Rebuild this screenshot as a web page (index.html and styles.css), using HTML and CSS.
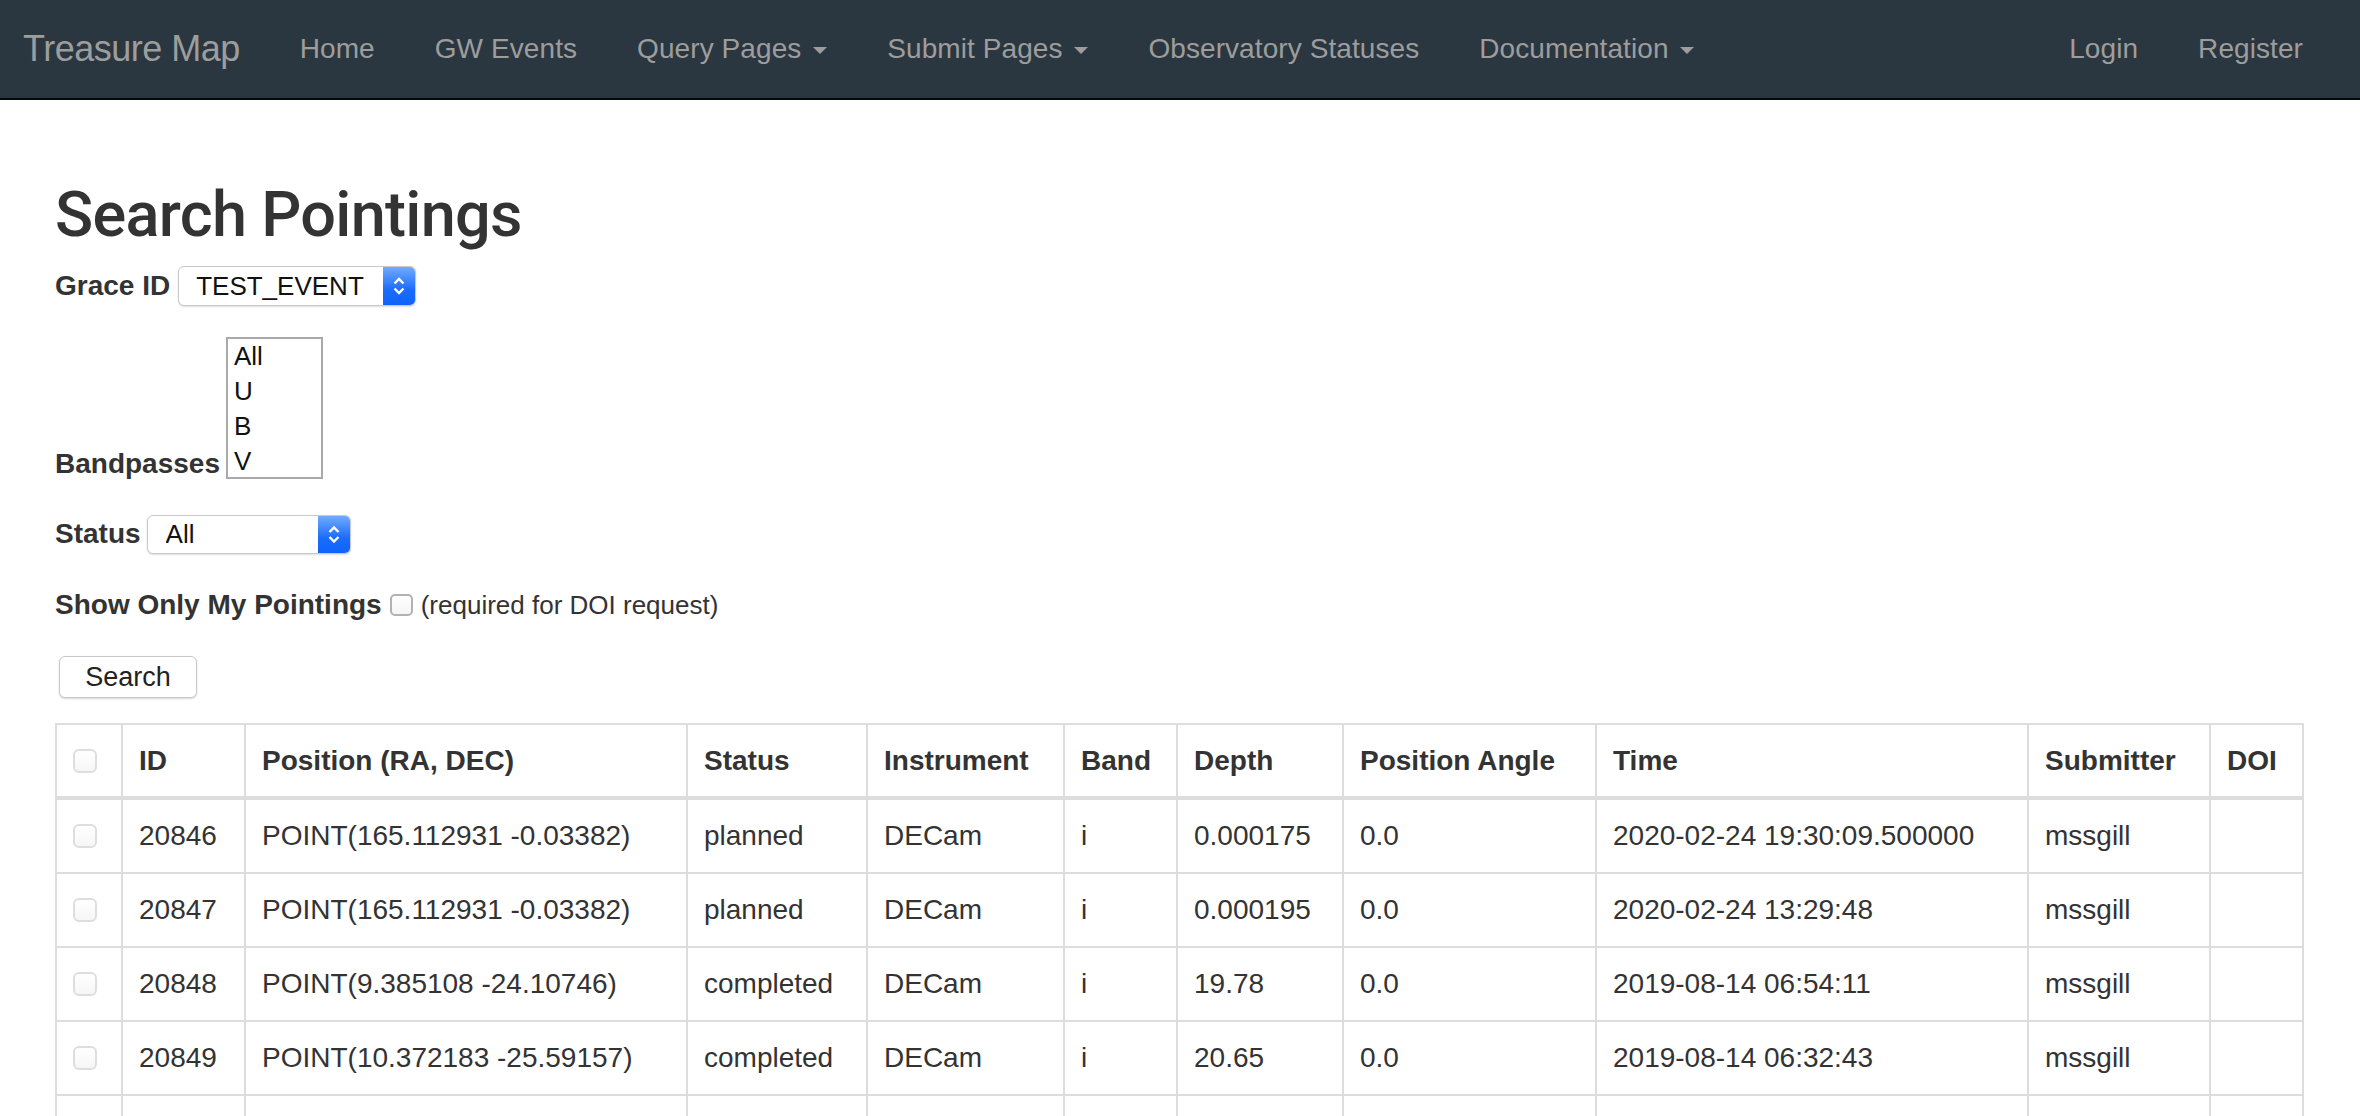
FILE: index.html
```html
<!DOCTYPE html>
<html lang="en">
<head>
<meta charset="utf-8">
<title>Search Pointings - Treasure Map</title>
<link rel="stylesheet" href="styles.css">
</head>
<body>
<nav class="navbar">
  <a class="brand" href="#">Treasure Map</a>
  <ul class="nav">
    <li><a class="nav-link" href="#">Home</a></li>
    <li><a class="nav-link" href="#">GW Events</a></li>
    <li><a class="nav-link" href="#">Query Pages <span class="caret"></span></a></li>
    <li><a class="nav-link" href="#">Submit Pages <span class="caret"></span></a></li>
    <li><a class="nav-link" href="#">Observatory Statuses</a></li>
    <li><a class="nav-link" href="#">Documentation <span class="caret"></span></a></li>
  </ul>
  <ul class="nav nav-right">
    <li><a class="nav-link" href="#">Login</a></li>
    <li><a class="nav-link" href="#">Register</a></li>
  </ul>
</nav>

<main class="page">
  <h1 class="title">Search Pointings</h1>
  <form class="search-form">
    <div class="form-row row-grace">
      <label class="form-label">Grace ID</label>
      <span class="mac-select mac-select--grace">
        <select class="mac-select__input"><option>TEST_EVENT</option></select>
        <span class="mac-select__btn"><svg width="32" height="40" viewBox="0 0 32 40"><path d="M11.5 17.5 L16 13 L20.5 17.5 M11.5 22.5 L16 27 L20.5 22.5" fill="none" stroke="#fff" stroke-width="2.4"/></svg></span>
      </span>
    </div>
    <div class="form-row row-bands">
      <label class="form-label form-label--bottom">Bandpasses</label>
      <select class="listbox" multiple size="4">
        <option>All</option>
        <option>U</option>
        <option>B</option>
        <option>V</option>
      </select>
    </div>
    <div class="form-row row-status">
      <label class="form-label">Status</label>
      <span class="mac-select mac-select--status">
        <select class="mac-select__input mac-select__input--status"><option>All</option></select>
        <span class="mac-select__btn"><svg width="32" height="39" viewBox="0 0 32 39"><path d="M11.5 17 L16 12.5 L20.5 17 M11.5 22 L16 26.5 L20.5 22" fill="none" stroke="#fff" stroke-width="2.4"/></svg></span>
      </span>
    </div>
    <div class="form-row row-mine">
      <label class="form-label">Show Only My Pointings</label>
      <input class="check check--form" type="checkbox">
      <span class="hint">(required for DOI request)</span>
    </div>
    <div class="form-row row-submit">
      <button class="btn" type="button">Search</button>
    </div>
  </form>

  <table class="data-table">
    <thead>
      <tr>
        <th class="c-check"><input class="check" type="checkbox"></th>
        <th class="c-id">ID</th>
        <th class="c-pos">Position (RA, DEC)</th>
        <th class="c-status">Status</th>
        <th class="c-inst">Instrument</th>
        <th class="c-band">Band</th>
        <th class="c-depth">Depth</th>
        <th class="c-angle">Position Angle</th>
        <th class="c-time">Time</th>
        <th class="c-sub">Submitter</th>
        <th class="c-doi">DOI</th>
      </tr>
    </thead>
    <tbody>
      <tr>
        <td><input class="check" type="checkbox"></td>
        <td>20846</td><td>POINT(165.112931 -0.03382)</td><td>planned</td><td>DECam</td><td>i</td><td>0.000175</td><td>0.0</td><td>2020-02-24 19:30:09.500000</td><td>mssgill</td><td></td>
      </tr>
      <tr>
        <td><input class="check" type="checkbox"></td>
        <td>20847</td><td>POINT(165.112931 -0.03382)</td><td>planned</td><td>DECam</td><td>i</td><td>0.000195</td><td>0.0</td><td>2020-02-24 13:29:48</td><td>mssgill</td><td></td>
      </tr>
      <tr>
        <td><input class="check" type="checkbox"></td>
        <td>20848</td><td>POINT(9.385108 -24.10746)</td><td>completed</td><td>DECam</td><td>i</td><td>19.78</td><td>0.0</td><td>2019-08-14 06:54:11</td><td>mssgill</td><td></td>
      </tr>
      <tr>
        <td><input class="check" type="checkbox"></td>
        <td>20849</td><td>POINT(10.372183 -25.59157)</td><td>completed</td><td>DECam</td><td>i</td><td>20.65</td><td>0.0</td><td>2019-08-14 06:32:43</td><td>mssgill</td><td></td>
      </tr>
      <tr>
        <td><input class="check" type="checkbox"></td>
        <td>20850</td><td>POINT(11.204571 -24.87312)</td><td>completed</td><td>DECam</td><td>i</td><td>20.41</td><td>0.0</td><td>2019-08-14 06:12:05</td><td>mssgill</td><td></td>
      </tr>
    </tbody>
  </table>
</main>
</body>
</html>
```

FILE: styles.css
```css
* {
  box-sizing: border-box;
}

html,
body {
  margin: 0;
  padding: 0;
}

body {
  font-family: "Liberation Sans", Arial, Helvetica, sans-serif;
  font-size: 28px;
  line-height: 40px;
  color: #333;
  background: #fff;
}

/* ---------- navbar ---------- */
.navbar {
  display: flex;
  align-items: center;
  height: 100px;
  padding: 0 27px 0 23px;
  background: #2b3740;
  border-bottom: 2px solid #080808;
}

.brand {
  padding-right: 30px;
  color: #9d9d9d;
  font-size: 36px;
  line-height: 40px;
  letter-spacing: -0.5px;
  text-decoration: none;
}

.nav {
  display: flex;
  margin: 0;
  padding: 0;
  list-style: none;
}

.nav-right {
  margin-left: auto;
}

.nav-link {
  display: block;
  padding: 0 30px;
  color: #9d9d9d;
  line-height: 40px;
  letter-spacing: 0.08px;
  text-decoration: none;
  white-space: nowrap;
}

.caret {
  display: inline-block;
  width: 0;
  height: 0;
  margin-left: 4px;
  vertical-align: middle;
  border-top: 7px solid #9d9d9d;
  border-left: 7px solid transparent;
  border-right: 7px solid transparent;
}

/* ---------- page ---------- */
.page {
  padding: 80px 58px 0 55px;
}

.title {
  margin: 0;
  font-family: Roboto, "Liberation Sans", Arial, sans-serif;
  font-weight: 500;
  font-size: 63px;
  line-height: 69px;
  letter-spacing: -0.7px;
  color: #333;
}

.search-form {
  display: flex;
  flex-direction: column;
  align-items: flex-start;
}

.form-row {
  display: flex;
  align-items: center;
  gap: 8px;
}

.row-grace {
  margin-top: 17px;
}

.row-bands {
  margin-top: 31px;
  align-items: flex-end;
  gap: 6px;
}

.row-status {
  margin-top: 35px;
  gap: 6px;
}

.row-mine {
  margin-top: 31px;
  height: 40px;
}

.row-submit {
  margin-top: 31px;
}

.form-label {
  font-weight: bold;
  line-height: 40px;
  color: #333;
}

.form-label--bottom {
  margin-bottom: -5px;
}

.hint {
  font-size: 26px;
  color: #333;
}

/* mac-like popup select */
.mac-select {
  display: inline-flex;
  height: 40px;
  background: #fff;
  border: 1px solid #c9c9c9;
  border-radius: 6px;
  overflow: hidden;
  box-shadow: 0 1px 2px rgba(0, 0, 0, 0.14);
}

.mac-select--grace {
  width: 238px;
}

.mac-select--status {
  width: 204px;
  height: 39px;
}

.mac-select__input {
  -webkit-appearance: none;
  appearance: none;
  flex: 1;
  min-width: 0;
  padding: 0 0 0 17px;
  border: 0;
  outline: none;
  background: transparent;
  font-family: "Liberation Sans", Arial, sans-serif;
  font-size: 26px;
  color: #111;
}

.mac-select__input--status {
  padding-left: 18px;
}

.mac-select__btn {
  flex: none;
  display: flex;
  align-items: center;
  justify-content: center;
  width: 32px;
  background: linear-gradient(#72abff, #1a6cfd 60%, #0f63fb);
}

/* listbox */
.listbox {
  width: 97px;
  height: 142px;
  padding: 0;
  border: 2px solid #a9a9a9;
  border-radius: 0;
  background: #fff;
  overflow: hidden;
  font-family: "Liberation Sans", Arial, sans-serif;
  font-size: 26px;
  color: #111;
  outline: none;
}

.listbox option {
  padding: 2px 6px;
}

/* checkbox */
.check {
  -webkit-appearance: none;
  appearance: none;
  display: block;
  width: 24px;
  height: 24px;
  margin: 8px 0;
  border: 2px solid #dedede;
  border-radius: 6px;
  background: linear-gradient(#fff, #f6f6f6);
}

.check--form {
  width: 23px;
  height: 22px;
  margin: 0;
  border: 2px solid #b2b2b2;
  border-radius: 5px;
}

/* button */
.btn {
  width: 138px;
  height: 42px;
  margin-left: 4px;
  padding: 0;
  background: #fff;
  border: 1px solid #c9c9c9;
  border-radius: 6px;
  box-shadow: 0 1px 2px rgba(0, 0, 0, 0.16);
  font-family: "Liberation Sans", Arial, sans-serif;
  font-size: 27px;
  color: #222;
}

/* ---------- table ---------- */
.data-table {
  width: 2247px;
  margin-top: 25px;
  border-collapse: collapse;
  table-layout: fixed;
  border: 2px solid #ddd;
}

.data-table th,
.data-table td {
  padding: 16px;
  border: 2px solid #ddd;
  text-align: left;
  vertical-align: top;
  line-height: 40px;
  white-space: nowrap;
  overflow: hidden;
}

.data-table thead th {
  padding-bottom: 15px;
  border-bottom-width: 4px;
  vertical-align: bottom;
  font-weight: bold;
}

.c-check { width: 66px; }
.c-id { width: 123px; }
.c-pos { width: 442px; }
.c-status { width: 180px; }
.c-inst { width: 197px; }
.c-band { width: 113px; }
.c-depth { width: 166px; }
.c-angle { width: 253px; }
.c-time { width: 432px; }
.c-sub { width: 182px; }
.c-doi { width: 93px; }
```
